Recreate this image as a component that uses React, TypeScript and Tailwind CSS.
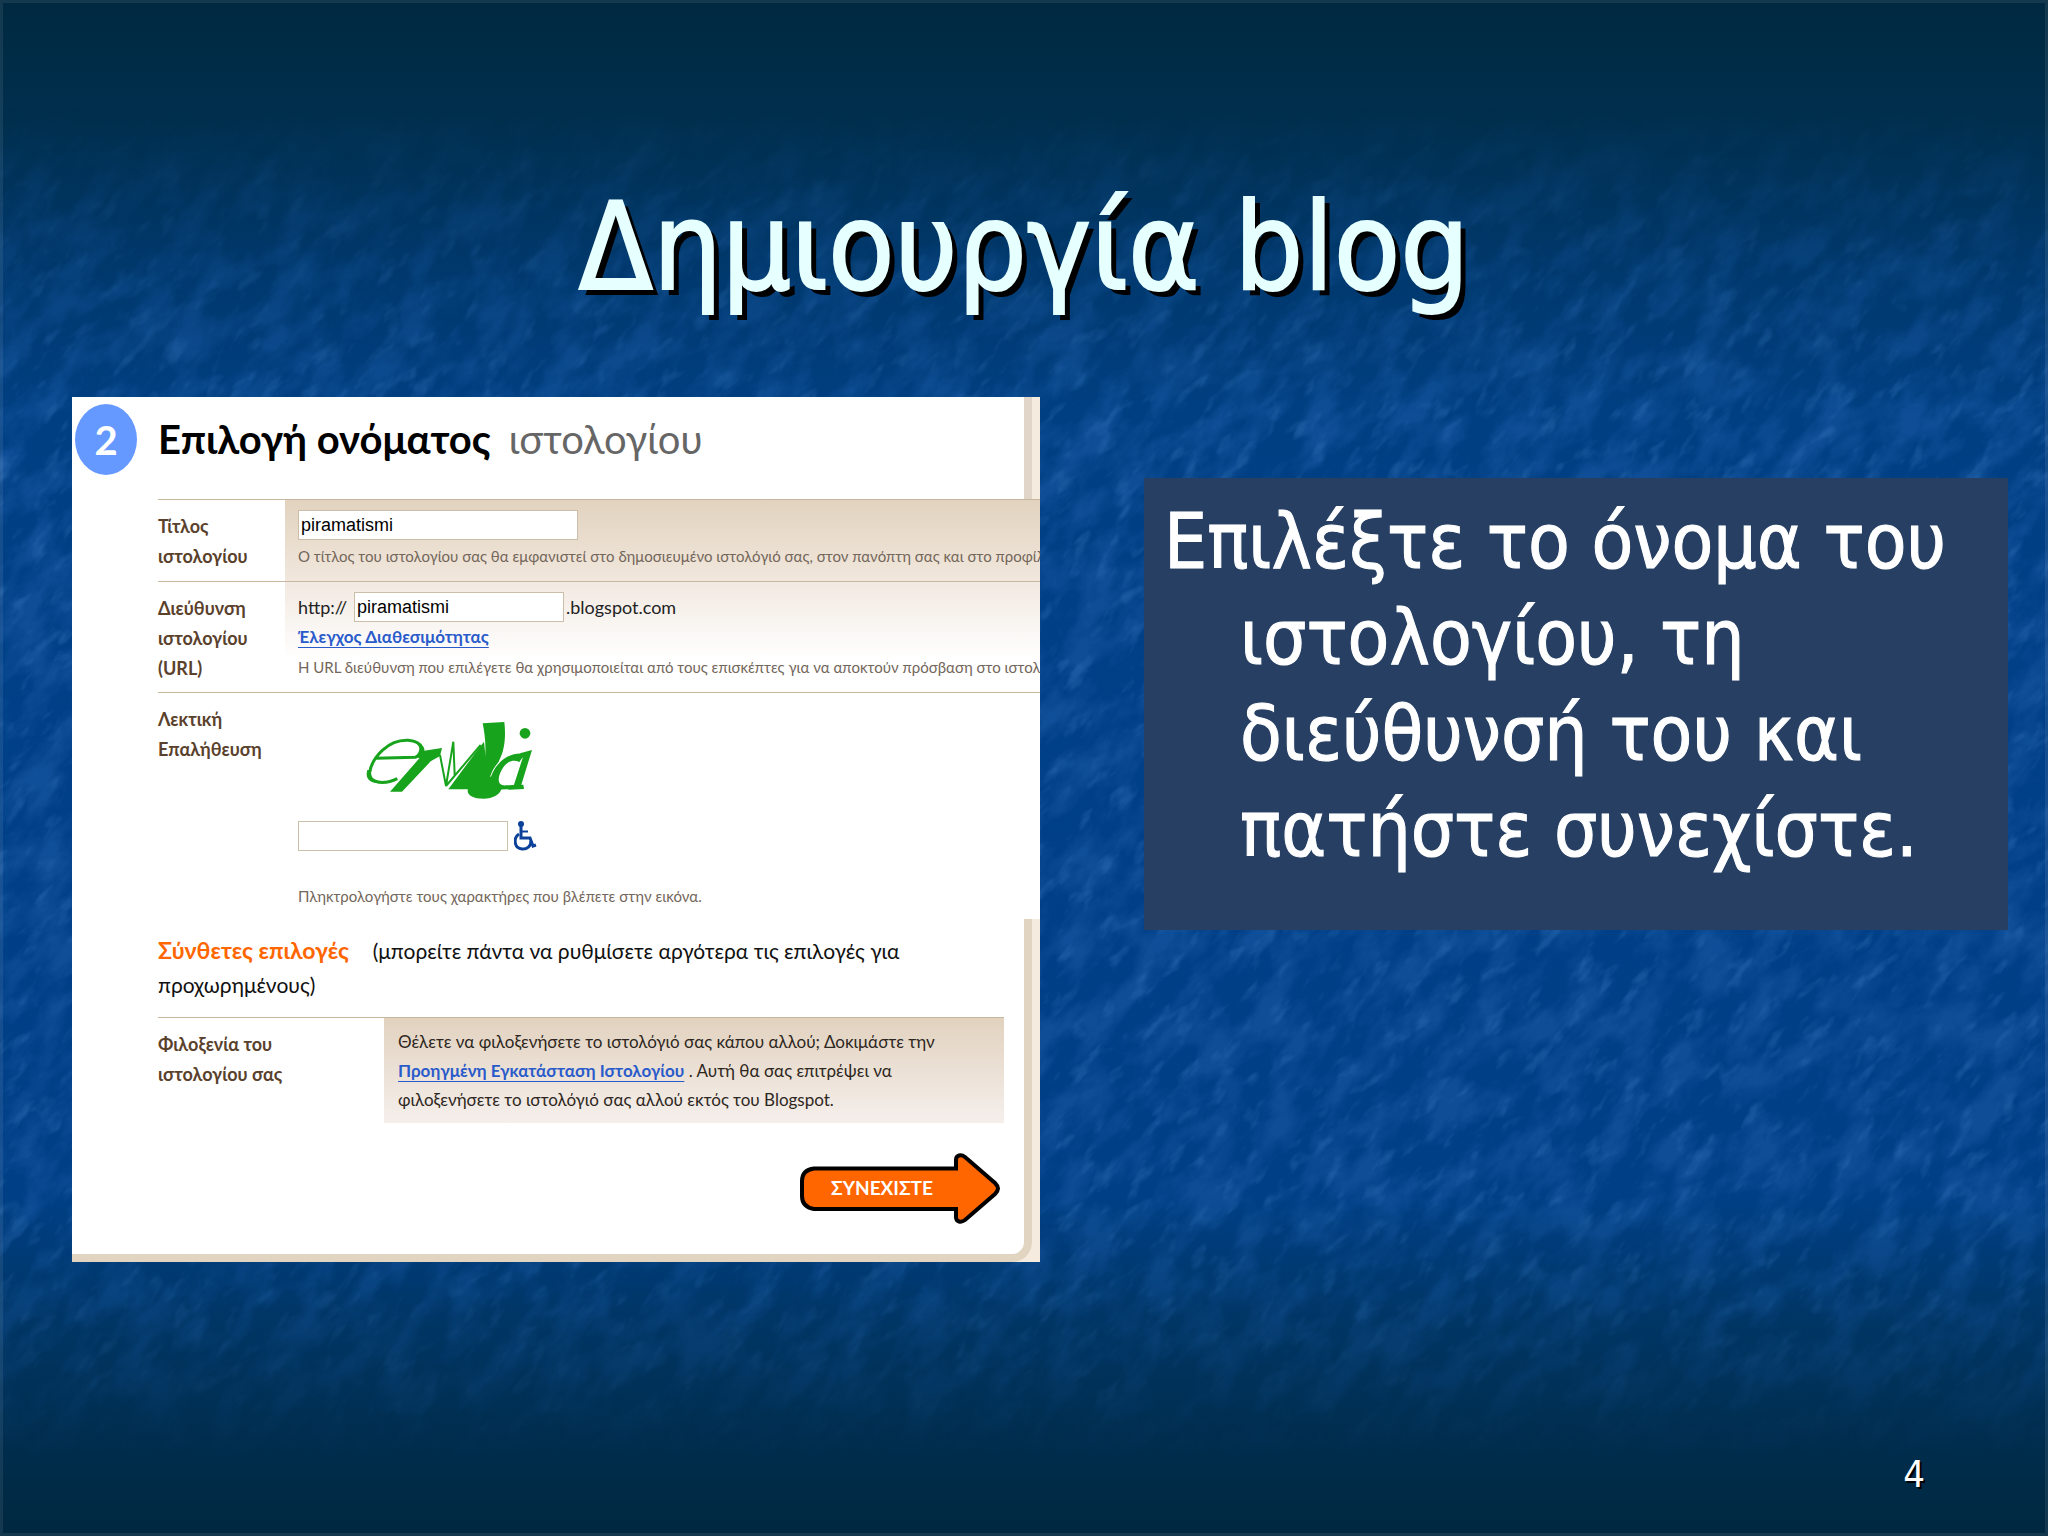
import { ReactNode } from "react";

function Texture() {
  return (
    <div className="absolute inset-0 overflow-hidden [mask-image:linear-gradient(to_bottom,transparent_7%,black_28%,black_76%,transparent_95%)]">
      <svg
        className="absolute -inset-[40%] h-[180%] w-[180%] -rotate-[50deg]"
        aria-hidden="true"
      >
        <filter
          id="light"
          x="0"
          y="0"
          width="100%"
          height="100%"
          colorInterpolationFilters="sRGB"
        >
          <feTurbulence
            type="fractalNoise"
            baseFrequency="0.018 0.034"
            numOctaves="5"
            seed="7"
          />
          <feColorMatrix values="0 0 0 0 0.1  0 0 0 0 0.35  0 0 0 0 0.64  3 0 0 0 -1.15" />
        </filter>
        <filter
          id="glint"
          x="0"
          y="0"
          width="100%"
          height="100%"
          colorInterpolationFilters="sRGB"
        >
          <feTurbulence
            type="fractalNoise"
            baseFrequency="0.03 0.07"
            numOctaves="3"
            seed="21"
          />
          <feColorMatrix values="0 0 0 0 0.2  0 0 0 0 0.45  0 0 0 0 0.72  4 0 0 0 -2.3" />
        </filter>
        <rect width="100%" height="100%" filter="url(#light)" opacity="0.6" />
        <rect width="100%" height="100%" filter="url(#glint)" opacity="0.4" />
      </svg>
    </div>
  );
}

function Captcha() {
  return (
    <svg
      viewBox="915 93 510 234"
      className="ml-[67px] h-[78px] w-[170px]"
      role="img"
      aria-label="captcha"
    >
      <g fill="#18a31c" stroke="none">
        <path
          d="M1012 266C975 284 924 282 929 246C938 200 985 148 1045 151C1092 156 1096 186 1066 202L948 205"
          fill="none"
          stroke="#18a31c"
          strokeWidth="9"
        />
        <path d="M934 240C928 272 950 276 975 272L965 280C925 282 915 262 922 240Z" />
        <path d="M1050 152C1085 160 1085 185 1062 202L1080 204C1108 180 1090 155 1050 152Z" />
        <path d="M1092 182L1146 174L1140 198L1112 214L1026 305L990 305L1078 205Z" />
        <path
          d="M1140 195L1158 288L1180 155L1184 255M1158 288L1262 165"
          fill="none"
          stroke="#18a31c"
          strokeWidth="6"
        />
        <path d="M1165 298L1245 190L1272 155L1280 230L1228 298Z" />
        <path d="M1268 100L1333 96C1338 140 1334 180 1318 210L1290 290L1325 296C1318 315 1300 325 1270 326C1238 326 1218 314 1224 296L1268 240C1282 190 1276 140 1268 100Z" />
        <path
          d="M1372 196C1340 198 1310 226 1298 262"
          fill="none"
          stroke="#fff"
          strokeWidth="16"
        />
        <path d="M1395 192C1335 180 1280 245 1290 300L1340 298L1392 296L1390 284L1340 286C1310 290 1310 262 1330 232C1345 212 1362 208 1378 216Z" />
        <path d="M1380 190L1416 180L1384 284L1392 297L1345 299L1352 288L1362 284L1388 204Z" />
        <circle cx="1395" cy="130" r="16" />
      </g>
    </svg>
  );
}

function Wheelchair() {
  return (
    <svg viewBox="0 0 23 30" className="h-[30px] w-[23px]" aria-hidden="true">
      <circle cx="7" cy="3" r="3" fill="#0b419b" />
      <g fill="none" stroke="#0b419b" strokeWidth="3">
        <path d="M7 5V17H16L19 25L22 24" />
        <path d="M7 10.500H14" strokeWidth="2" />
        <path d="M5 13C-1 17 0 27 8 28C13 28.500 17 25 17 20" />
      </g>
    </svg>
  );
}

function Row({
  label,
  htmlFor,
  cell,
  children,
}: {
  label: ReactNode;
  htmlFor: string;
  cell: string;
  children: ReactNode;
}) {
  return (
    <div className="ml-[86px] grid grid-cols-[127px_1fr] border-t border-[#c8b79f]">
      <label
        htmlFor={htmlFor}
        className="pt-[11px] text-[18px] leading-[30px] font-bold text-[#5a412c]"
      >
        {label}
      </label>
      <div className={"overflow-hidden pl-[13px] " + cell}>{children}</div>
    </div>
  );
}

const input =
  "h-[30px] border border-[#cbbfa9] bg-white px-0.5 font-['Liberation_Sans',sans-serif] text-[18px] text-black outline-none";
const hint = "text-[15px] leading-[26px] whitespace-nowrap text-[#73665a]";
const link = "font-bold text-[#2a5bcb] underline underline-offset-4";

function BlogForm() {
  return (
    <form
      className="overflow-hidden bg-[#f5ecdf] font-[Lato,sans-serif]"
      onSubmit={(e) => e.preventDefault()}
    >
      <div className="mr-2 flex h-[102px] items-start border-r-8 border-[#e1d5c9] bg-white pt-[7px]">
        <div className="ml-[3px] flex h-[71px] w-[62px] items-center justify-center rounded-[50%] bg-[#6699ff] text-[40px] font-bold text-white">
          2
        </div>
        <h2 className="ml-[21px] text-[40px] leading-[71px] font-bold text-black">
          Επιλογή ονόματος
          <span className="ml-[18px] font-normal text-[#666]">ιστολογίου</span>
        </h2>
      </div>

      <div className="bg-white">
        <Row
          label={
            <>
              Τίτλος
              <br />
              ιστολογίου
            </>
          }
          htmlFor="title"
          cell="bg-linear-to-b from-[#e2d3bf] to-[#f1e7dd] pt-[10px] pb-3"
        >
          <input
            id="title"
            className={input + " block w-[280px]"}
            defaultValue="piramatismi"
          />
          <p className={hint + " mt-[3px]"}>
            Ο τίτλος του ιστολογίου σας θα εμφανιστεί στο δημοσιευμένο ιστολόγιό
            σας, στον πανόπτη σας και στο προφίλ
          </p>
        </Row>

        <Row
          label={
            <>
              Διεύθυνση
              <br />
              ιστολογίου
              <br />
              (URL)
            </>
          }
          htmlFor="url"
          cell="bg-linear-to-b from-[#f2e9e1] to-white to-70% pt-[10px] pb-3"
        >
          <div className="flex items-center text-[18px] leading-[30px] text-[#222]">
            <span className="w-14">http://</span>
            <input
              id="url"
              className={input + " w-[210px]"}
              defaultValue="piramatismi"
            />
            <span className="ml-0.5">.blogspot.com</span>
          </div>
          <a href="#check" className={link + " block text-[17px] leading-[30px]"}>
            Έλεγχος Διαθεσιμότητας
          </a>
          <p className={hint + " mt-0.5"}>
            Η URL διεύθυνση που επιλέγετε θα χρησιμοποιείται από τους επισκέπτες
            για να αποκτούν πρόσβαση στο ιστολ
          </p>
        </Row>

        <Row
          label={
            <>
              Λεκτική
              <br />
              Επαλήθευση
            </>
          }
          htmlFor="captcha"
          cell="pt-7 pb-[10px]"
        >
          <Captcha />
          <div className="mt-[22px] flex items-center gap-1.5">
            <input id="captcha" className={input + " w-[210px]"} />
            <Wheelchair />
          </div>
          <p className={hint + " mt-8"}>
            Πληκτρολογήστε τους χαρακτήρες που βλέπετε στην εικόνα.
          </p>
        </Row>
      </div>

      <div className="mr-2 rounded-br-[20px] border-r-8 border-b-8 border-[#e1d5c2] bg-white pt-[15px] pr-5 pb-[30px] pl-[86px]">
        <p className="text-[21px] leading-[34px] text-[#111]">
          <b className="mr-6 text-[23px] leading-none text-[#ff6600]">
            Σύνθετες επιλογές
          </b>
          (μπορείτε πάντα να ρυθμίσετε αργότερα τις επιλογές για προχωρημένους)
        </p>
        <div className="mt-[15px] grid grid-cols-[226px_1fr] border-t border-[#c8b79f]">
          <h3 className="pt-[11px] text-[18px] leading-[30px] font-bold text-[#5a412c]">
            Φιλοξενία του
            <br />
            ιστολογίου σας
          </h3>
          <p className="bg-linear-to-b from-[#e2d2bf] to-[#f5efec] px-[14px] py-[9px] text-[17px] leading-[29px] text-[#2e2721]">
            Θέλετε να φιλοξενήσετε το ιστολόγιό σας κάπου αλλού; Δοκιμάστε την{" "}
            <a href="#advanced" className={link}>
              Προηγμένη Εγκατάσταση Ιστολογίου
            </a>{" "}
            . Αυτή θα σας επιτρέψει να φιλοξενήσετε το ιστολόγιό σας αλλού εκτός
            του Blogspot.
          </p>
        </div>
        <button
          type="submit"
          className="relative mt-[30px] mr-1 ml-auto block h-[71px] w-[200px] cursor-pointer pr-[36px] text-[19px] font-bold text-white"
        >
          <svg
            viewBox="0 0 200 71"
            className="absolute inset-0 h-full w-full"
            aria-hidden="true"
          >
            <path
              d="M14 15.500H156V7C156 2 161 1 165 4L195 30C199 34 199 37 195 41L165 67C161 70 156 69 156 64V56H14Q2 54 2 43V28Q2 17 14 15.500Z"
              fill="#ff6600"
              stroke="#000"
              strokeWidth="4"
            />
          </svg>
          <span className="relative">ΣΥΝΕΧΊΣΤΕ</span>
        </button>
      </div>
    </form>
  );
}

export default function App() {
  return (
    <div className="relative flex min-h-screen flex-col bg-[linear-gradient(to_bottom,#002940_0%,#002f4e_8%,#00386b_17%,#003f82_27%,#004088_50%,#003f85_78%,#003665_86%,#002e50_93%,#00283f_100%)] font-['DejaVu_Sans_Condensed','DejaVu_Sans',sans-serif]">
      <Texture />
      <div className="absolute inset-0 shadow-[inset_0_0_0_3px_rgba(255,255,255,0.08)]" />

      <h1 className="relative pt-[178px] text-center text-[121px] leading-[140px] text-[#e6ffff] [-webkit-text-stroke:2px_#e6ffff] [text-shadow:6px_6px_0_#000]">
        Δημιουργία blog
      </h1>

      <main className="relative mt-[79px] grid grid-cols-[968fr_864fr] items-start gap-[104px] pr-10 pl-[72px]">
        <BlogForm />
        <p className="mt-[81px] bg-[#263f62] pt-4 pr-4 pb-[52px] pl-24 -indent-[76px] text-[76px] leading-[96px] text-white [-webkit-text-stroke:1px_white]">
          Επιλέξτε το όνομα του ιστολογίου, τη διεύθυνσή του και πατήστε
          συνεχίστε.
        </p>
      </main>

      <footer className="relative mt-auto pr-[123px] pb-10 text-right text-[38px] leading-[44px] text-white [text-shadow:2px_2px_0_#000]">
        4
      </footer>
    </div>
  );
}
